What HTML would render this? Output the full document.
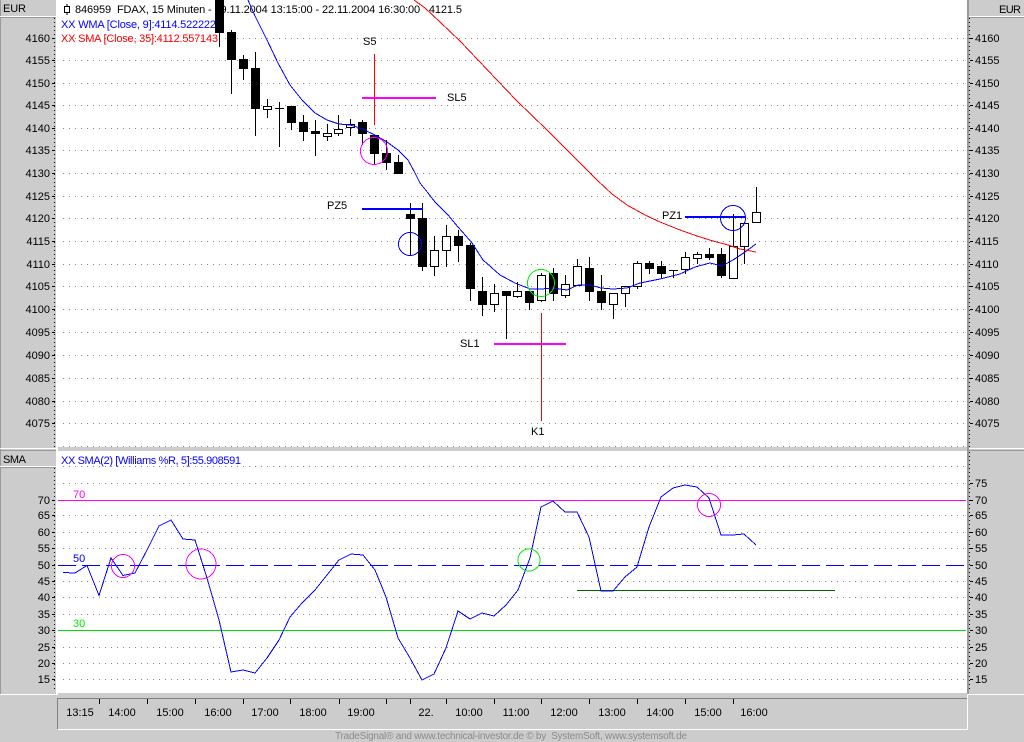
<!DOCTYPE html>
<html><head><meta charset="utf-8"><title>FDAX</title>
<style>
html,body{margin:0;padding:0;background:#ccc;width:1024px;height:742px;overflow:hidden}
svg{display:block;position:absolute;left:0;top:0}
text{font-family:"Liberation Sans",sans-serif;font-size:11px;fill:#000}
.c{shape-rendering:crispEdges}
.b rect{width:9px;fill:#000}
.w rect{width:7px;fill:#fff}
.l text{text-anchor:end}
.n{fill:none}
</style></head><body>
<svg width="1024" height="742" viewBox="0 0 1024 742" xmlns="http://www.w3.org/2000/svg">
<rect width="1024" height="742" fill="#ccc"/>
<rect x="58" y="0" width="909" height="447" fill="#fff"/>
<rect x="58" y="451" width="909" height="242" fill="#fff"/>

<!-- grid -->
<path class="c n" stroke="#8c8c8c" stroke-dasharray="1 5" d="M63 38.5H964M63 60.5H964M63 83.5H964M63 105.5H964M63 128.5H964M63 150.5H964M63 173.5H964M63 196.5H964M63 218.5H964M63 241.5H964M63 264.5H964M63 286.5H964M63 309.5H964M63 332.5H964M63 355.5H964M63 378.5H964M63 401.5H964M63 423.5H964M63 446.5H964M63 466.5H964M63 483.5H964M63 515.5H964M63 532.5H964M63 548.5H964M63 581.5H964M63 597.5H964M63 614.5H964M63 647.5H964M63 663.5H964M63 679.5H964"/>

<!-- title -->
<rect class="c" x="64.5" y="6.5" width="5" height="6" fill="#fff" stroke="#000"/><path class="c" stroke="#000" d="M67 4v2M67 13v2"/>
<text x="75" y="13" textLength="387" lengthAdjust="spacing" xml:space="preserve">846959  FDAX, 15 Minuten - 19.11.2004 13:15:00 - 22.11.2004 16:30:00   4121.5</text>
<text x="61" y="28" style="fill:#00f" textLength="155">XX WMA [Close, 9]:4114.522222</text>
<text x="61" y="42" style="fill:#f00" textLength="157">XX SMA [Close, 35]:4112.557143</text>
<text x="61" y="464" style="fill:#00f" textLength="180">XX SMA(2) [Williams %R, 5]:55.908591</text>

<!-- wicks -->
<path class="c n" stroke="#000" d="M219.5 0V47M231.5 30V94M243.5 55V80M255.5 52V136M267.5 99V118M279.5 102V147M291.5 106V130M303.5 115V141M315.5 120V156M327.5 124V141M338.5 115V136M350.5 119V136M362.5 120V145M374.5 135V164M386.5 140V170M398.5 155V174M410.5 203V255M422.5 203V271M434.5 236V276M446.5 225V267M458.5 230V262M470.5 243V301M482.5 277V316M494.5 284V312M506.5 291V339M517.5 282V298M529.5 291V310M541.5 273V302M553.5 268V301M565.5 275V298M577.5 259V285M589.5 257V301M601.5 275V310M613.5 293V319M625.5 286V307M637.5 261V289M649.5 261V274M661.5 261V279M673.5 270V278M685.5 252V274M697.5 252V264M709.5 248V260M721.5 248V278M733.5 214V278M744.5 223V264M756.5 187V222"/>
<path class="c n" stroke="#000" d="M275 108.5h9M669 270.5h9"/>
<!-- bodies -->
<g class="b c">
<rect x="215" y="0" height="33"/><rect x="227" y="32" height="28"/><rect x="239" y="59" height="10"/><rect x="251" y="68" height="41"/><rect x="263" y="106" height="4"/><rect x="287" y="106" height="17"/><rect x="299" y="122" height="10"/><rect x="311" y="131" height="3"/><rect x="323" y="133" height="4"/><rect x="334" y="129" height="5"/><rect x="346" y="124" height="4"/><rect x="358" y="122" height="12"/><rect x="370" y="135" height="19"/><rect x="382" y="153" height="10"/><rect x="394" y="162" height="12"/><rect x="406" y="214" height="5"/><rect x="418" y="218" height="49"/><rect x="430" y="250" height="17"/><rect x="442" y="236" height="15"/><rect x="454" y="236" height="10"/><rect x="466" y="245" height="44"/><rect x="478" y="291" height="14"/><rect x="490" y="293" height="12"/><rect x="502" y="291" height="5"/><rect x="513" y="291" height="6"/><rect x="525" y="291" height="12"/><rect x="537" y="275" height="26"/><rect x="549" y="273" height="21"/><rect x="561" y="284" height="12"/><rect x="573" y="266" height="20"/><rect x="585" y="268" height="24"/><rect x="597" y="291" height="12"/><rect x="609" y="293" height="12"/><rect x="621" y="286" height="8"/><rect x="633" y="263" height="24"/><rect x="645" y="263" height="6"/><rect x="657" y="266" height="8"/><rect x="681" y="257" height="13"/><rect x="693" y="254" height="5"/><rect x="705" y="254" height="4"/><rect x="717" y="254" height="22"/><rect x="729" y="246" height="33"/><rect x="740" y="223" height="24"/><rect x="752" y="212" height="11"/>
</g>
<g class="w c">
<rect x="264" y="107" height="2"/><rect x="324" y="134" height="2"/><rect x="335" y="130" height="3"/><rect x="347" y="125" height="2"/><rect x="431" y="251" height="15"/><rect x="443" y="237" height="13"/><rect x="491" y="294" height="10"/><rect x="514" y="292" height="4"/><rect x="538" y="276" height="24"/><rect x="562" y="285" height="10"/><rect x="574" y="267" height="18"/><rect x="610" y="294" height="10"/><rect x="622" y="287" height="6"/><rect x="634" y="264" height="22"/><rect x="682" y="258" height="11"/><rect x="694" y="255" height="3"/><rect x="730" y="247" height="31"/><rect x="741" y="224" height="22"/><rect x="753" y="213" height="9"/>
</g>
<path class="c n" stroke="#000" d="M733.5 214V246"/>

<!-- averages -->
<path class="c n" stroke="#00f" d="M248 0L255 16L267 40L278 63L290 85L302 100L315 113L327 120L339 124L350 125L360 128L375 135L387 142L398 150L408 160L415 173L420 183L428 193L435 202L448 215L458 227L466 236L472 243L483 260L500 275L515 283L530 289L541 289L553 288L567 290L578 285L590 285L601 288L613 289L627 288L640 283L660 279L680 274L695 267L710 263L722 266L733 260L745 252L756 244"/>
<path class="c n" stroke="#f00" d="M414 0L425 8L440 22L460 41L478 60L516 100L547 130L570 153L580 163L597 180L612 194L627 205L645 215L660 222L680 230L697 236L713 241L728 245L740 249L756 252"/>

<!-- annotations -->
<path class="c n" stroke="#f00" d="M374.5 54V125M541.5 313V421"/>
<path class="c n" stroke="#f0f" stroke-width="2" d="M362 98H436M494 344H566"/>
<path class="c n" stroke="#00f" stroke-width="2" d="M362 209H423M685 217H746"/>
<circle class="c" cx="374" cy="151" r="13.5" stroke="#f0f" fill="none"/>
<circle class="c" cx="410" cy="244" r="11.5" stroke="#00f" fill="none"/>
<circle class="c" cx="541" cy="283" r="13.5" stroke="#0e0" fill="none"/>
<circle class="c" cx="733" cy="218" r="12.5" stroke="#00f" fill="none"/>
<text x="363" y="45">S5</text><text x="447" y="101">SL5</text><text x="327" y="209">PZ5</text><text x="460" y="347">SL1</text><text x="531" y="435">K1</text><text x="662" y="219">PZ1</text>

<!-- lower panel -->
<path class="c n" stroke="#f0f" d="M58 500.5H966"/>
<path class="c n" stroke="#00e000" d="M58 630.5H966"/>
<path class="c n" stroke="#00f" stroke-dasharray="18 6" d="M58 565.5H964"/>
<path class="c n" stroke="#006400" d="M577 590.5H835"/>
<path class="c n" stroke="#00f" d="M63 572.5L75 573L87 565.5L99 595.5L111 558L123 575.5L135 573L147 550L159 526L171 520L183 539L195 540L207 578L219 620L231 672L243 670L255 673L267 658L279 640L290 617L302 603L315 590L327 575L339 560L351 554L363 555L375 570L386 597L398 638L410 658L422 680L434 674L446 648L458 611L470 619L482 613L494 616L506 605L518 590L530 558L541 507L553 501L565 512L577 512L589 537L601 591L613 591L625 577L637 567L649 527L661 497L673 488L685 485L697 487L709 498L721 535L733 535L744 534L756 545"/>
<circle class="c" cx="123" cy="566" r="11.5" stroke="#f0f" fill="none"/>
<circle class="c" cx="201" cy="564" r="15" stroke="#f0f" fill="none"/>
<circle class="c" cx="529" cy="560" r="11" stroke="#0e0" fill="none"/>
<circle class="c" cx="709" cy="505" r="11.5" stroke="#f0f" fill="none"/>
<text x="73" y="498" style="fill:#f0f">70</text><text x="73" y="562" style="fill:#00f">50</text><text x="73" y="627" style="fill:#0e0">30</text>

<!-- left panel chrome -->
<g class="c">
<rect x="0" y="0" width="1" height="694" fill="#999"/>
<rect x="56" y="0" width="2" height="694" fill="#fff"/>
<rect x="0" y="16" width="56" height="1" fill="#fff"/><rect x="0" y="17" width="56" height="1" fill="#999"/>
<rect x="0" y="448" width="56" height="1" fill="#fff"/><rect x="0" y="450" width="56" height="1" fill="#999"/>
<rect x="0" y="466" width="56" height="1" fill="#fff"/><rect x="0" y="467" width="56" height="1" fill="#999"/>
<rect x="0" y="694" width="58" height="1" fill="#fff"/>
<rect x="967" y="0" width="2" height="694" fill="#999"/>
<rect x="969" y="16" width="55" height="1" fill="#fff"/><rect x="969" y="17" width="55" height="1" fill="#999"/>
<rect x="969" y="448" width="55" height="1" fill="#fff"/><rect x="969" y="450" width="55" height="1" fill="#999"/>
<rect x="967" y="694" width="57" height="1" fill="#fff"/>
</g>
<path class="c n" stroke="#000" stroke-dasharray="1 3" d="M54.5 18V447M54.5 468V692M969.5 18V447M969.5 452V692"/>
<path class="c n" stroke="#000" d="M52 38.5h3M52 60.5h3M52 83.5h3M52 105.5h3M52 128.5h3M52 150.5h3M52 173.5h3M52 196.5h3M52 218.5h3M52 241.5h3M52 264.5h3M52 286.5h3M52 309.5h3M52 332.5h3M52 355.5h3M52 378.5h3M52 401.5h3M52 423.5h3M52 500.5h3M52 515.5h3M52 532.5h3M52 548.5h3M52 565.5h3M52 581.5h3M52 597.5h3M52 614.5h3M52 630.5h3M52 647.5h3M52 663.5h3M52 679.5h3M970 38.5h3M970 60.5h3M970 83.5h3M970 105.5h3M970 128.5h3M970 150.5h3M970 173.5h3M970 196.5h3M970 218.5h3M970 241.5h3M970 264.5h3M970 286.5h3M970 309.5h3M970 332.5h3M970 355.5h3M970 378.5h3M970 401.5h3M970 423.5h3M970 483.5h3M970 500.5h3M970 515.5h3M970 532.5h3M970 548.5h3M970 565.5h3M970 581.5h3M970 597.5h3M970 614.5h3M970 630.5h3M970 647.5h3M970 663.5h3M970 679.5h3"/>

<text x="3" y="12" textLength="23">EUR</text><text x="999" y="13" textLength="22">EUR</text><text x="3" y="463" textLength="23">SMA</text>
<g class="l">
<text x="50" y="42">4160</text><text x="50" y="64">4155</text><text x="50" y="87">4150</text><text x="50" y="109">4145</text><text x="50" y="132">4140</text><text x="50" y="154">4135</text><text x="50" y="177">4130</text><text x="50" y="200">4125</text><text x="50" y="222">4120</text><text x="50" y="245">4115</text><text x="50" y="268">4110</text><text x="50" y="290">4105</text><text x="50" y="313">4100</text><text x="50" y="336">4095</text><text x="50" y="359">4090</text><text x="50" y="382">4085</text><text x="50" y="405">4080</text><text x="50" y="427">4075</text>
<text x="50" y="504">70</text><text x="50" y="519">65</text><text x="50" y="536">60</text><text x="50" y="552">55</text><text x="50" y="569">50</text><text x="50" y="585">45</text><text x="50" y="601">40</text><text x="50" y="618">35</text><text x="50" y="634">30</text><text x="50" y="651">25</text><text x="50" y="667">20</text><text x="50" y="683">15</text>
</g>
<g>
<text x="975" y="42">4160</text><text x="975" y="64">4155</text><text x="975" y="87">4150</text><text x="975" y="109">4145</text><text x="975" y="132">4140</text><text x="975" y="154">4135</text><text x="975" y="177">4130</text><text x="975" y="200">4125</text><text x="975" y="222">4120</text><text x="975" y="245">4115</text><text x="975" y="268">4110</text><text x="975" y="290">4105</text><text x="975" y="313">4100</text><text x="975" y="336">4095</text><text x="975" y="359">4090</text><text x="975" y="382">4085</text><text x="975" y="405">4080</text><text x="975" y="427">4075</text>
<text x="975" y="487">75</text><text x="975" y="504">70</text><text x="975" y="519">65</text><text x="975" y="536">60</text><text x="975" y="552">55</text><text x="975" y="569">50</text><text x="975" y="585">45</text><text x="975" y="601">40</text><text x="975" y="618">35</text><text x="975" y="634">30</text><text x="975" y="651">25</text><text x="975" y="667">20</text><text x="975" y="683">15</text>
</g>

<!-- time axis -->
<g class="c">
<rect x="57" y="698" width="910" height="1" fill="#808080"/>
<rect x="57" y="698" width="1" height="31" fill="#808080"/>
<rect x="58" y="729" width="910" height="1" fill="#fff"/>
<rect x="967" y="695" width="1" height="35" fill="#fff"/>
</g>
<path class="c n" stroke="#000" d="M99.5 699v5M147.5 699v5M195.5 699v5M243.5 699v5M290.5 699v5M339.5 699v5M386.5 699v5M410.5 699v5M446.5 699v5M494.5 699v5M541.5 699v5M589.5 699v5M637.5 699v5M685.5 699v5M733.5 699v5"/>
<g style="text-anchor:middle">
<text x="80" y="716">13:15</text><text x="122" y="716">14:00</text><text x="170" y="716">15:00</text><text x="218" y="716">16:00</text><text x="265" y="716">17:00</text><text x="313" y="716">18:00</text><text x="361" y="716">19:00</text><text x="426" y="716">22.</text><text x="469" y="716">10:00</text><text x="516" y="716">11:00</text><text x="564" y="716">12:00</text><text x="612" y="716">13:00</text><text x="660" y="716">14:00</text><text x="708" y="716">15:00</text><text x="754" y="716">16:00</text>
</g>
<text x="335" y="739" style="fill:#8c8c8c;font-size:10px" textLength="352" xml:space="preserve">TradeSignal® and www.technical-investor.de © by  SystemSoft, www.systemsoft.de</text>
</svg>
</body></html>
